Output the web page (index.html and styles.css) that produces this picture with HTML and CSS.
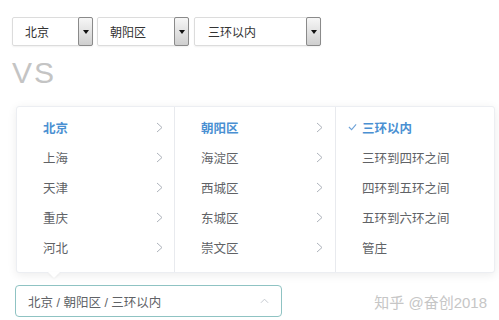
FILE: index.html
```html
<!DOCTYPE html>
<html>
<head>
    <title>Cascader</title>
<link rel="stylesheet" href="styles.css">
</head>
<body>
  <div class="selects">
    <div class="select w1"><span>北京</span><div class="btn"><i></i></div></div>
    <div class="select w2"><span>朝阳区</span><div class="btn"><i></i></div></div>
    <div class="select w3"><span>三环以内</span><div class="btn"><i></i></div></div>
  </div>
  <div class="vs">VS</div>

  <div class="panel">
    <div class="menu m1">
      <div class="item active"><span>北京</span><svg class="chev" viewBox="0 0 7 11"><polyline points="1,1 6,5.5 1,10"/></svg></div>
      <div class="item"><span>上海</span><svg class="chev" viewBox="0 0 7 11"><polyline points="1,1 6,5.5 1,10"/></svg></div>
      <div class="item"><span>天津</span><svg class="chev" viewBox="0 0 7 11"><polyline points="1,1 6,5.5 1,10"/></svg></div>
      <div class="item"><span>重庆</span><svg class="chev" viewBox="0 0 7 11"><polyline points="1,1 6,5.5 1,10"/></svg></div>
      <div class="item"><span>河北</span><svg class="chev" viewBox="0 0 7 11"><polyline points="1,1 6,5.5 1,10"/></svg></div>
    </div>
    <div class="menu m2">
      <div class="item active"><span>朝阳区</span><svg class="chev" viewBox="0 0 7 11"><polyline points="1,1 6,5.5 1,10"/></svg></div>
      <div class="item"><span>海淀区</span><svg class="chev" viewBox="0 0 7 11"><polyline points="1,1 6,5.5 1,10"/></svg></div>
      <div class="item"><span>西城区</span><svg class="chev" viewBox="0 0 7 11"><polyline points="1,1 6,5.5 1,10"/></svg></div>
      <div class="item"><span>东城区</span><svg class="chev" viewBox="0 0 7 11"><polyline points="1,1 6,5.5 1,10"/></svg></div>
      <div class="item"><span>崇文区</span><svg class="chev" viewBox="0 0 7 11"><polyline points="1,1 6,5.5 1,10"/></svg></div>
    </div>
    <div class="menu m3">
      <div class="item active"><svg class="check" viewBox="0 0 10 8"><polyline points="1,4 4,7 9,1"/></svg><span>三环以内</span></div>
      <div class="item"><span>三环到四环之间</span></div>
      <div class="item"><span>四环到五环之间</span></div>
      <div class="item"><span>五环到六环之间</span></div>
      <div class="item"><span>管庄</span></div>
    </div>
    <div class="arrow"></div>
  </div>

  <div class="bottom">
    <div class="input">
      <span>北京 / 朝阳区 / 三环以内</span>
      <svg class="up" viewBox="0 0 10 6"><polyline points="1,5 5,1 9,5"/></svg>
    </div>
    <div class="mark">知乎 @奋创2018</div>
  </div>
</body>
</html>
```

FILE: styles.css
```css
body {
  margin: 0;
  padding-top: 17px;
  background-color: white;
  font-family: "Liberation Sans", "Noto Sans CJK SC", sans-serif;
  color: #606266;
}
.selects {
  display: flex;
  margin-left: 12px;
  gap: 4px;
}
.select {
  display: flex;
  align-items: center;
  justify-content: space-between;
  height: 27px;
  border: 1px solid #dcdcdc;
  border-radius: 2px;
  box-shadow: 0 1px 2px rgba(0, 0, 0, 0.06);
  font-size: 12px;
  color: #333;
}
.select span {
  padding-left: 12px;
}
.w1 { width: 79px; }
.w2 { width: 90px; }
.w3 { width: 125px; margin-left: 1px; }
.w3 span { padding-left: 13px; }
.btn {
  width: 13px;
  height: 27px;
  margin-right: -1px;
  border: 1px solid #8a8a8a;
  border-radius: 2px;
  background: linear-gradient(#f6f6f6, #cfcfcf);
  display: flex;
  justify-content: center;
  align-items: center;
}
.btn i {
  width: 0;
  height: 0;
  border-left: 3px solid transparent;
  border-right: 3px solid transparent;
  border-top: 4px solid #111;
}
.vs {
  margin: 12px 0 0 12px;
  font-size: 30px;
  line-height: 30px;
  height: 30px;
  letter-spacing: 2px;
  color: #c4c4c4;
}
.panel {
  position: relative;
  display: flex;
  margin: 18px 0 0 16px;
  width: 477px;
  height: 165px;
  border: 1px solid #eceef2;
  border-radius: 3px;
  box-shadow: 0 2px 10px rgba(0, 0, 0, 0.08);
  background: white;
}
.menu {
  padding-top: 5px;
  box-sizing: border-box;
}
.m1, .m2 {
  border-right: 1px solid #e8eaee;
}
.m1 { width: 158px; }
.m2 { width: 161px; }
.m3 { flex: 1; }
.item {
  display: flex;
  align-items: center;
  height: 30px;
  font-size: 12.5px;
  padding: 0 11px 0 26px;
}
.m2 .item { padding-right: 12px; }
.item span {
  flex: 1;
}
.item.active {
  color: #4a90d2;
  font-weight: bold;
}
.chev {
  width: 7px;
  height: 11px;
  fill: none;
  stroke: #aeb3bb;
  stroke-width: 1;
}
.check {
  width: 9px;
  height: 8px;
  margin-left: -14px;
  margin-right: 5px;
  fill: none;
  stroke: #6fa3d8;
  stroke-width: 1.2;
}
.arrow {
  position: absolute;
  left: 31px;
  bottom: -6px;
  width: 0;
  height: 0;
  border-left: 6px solid transparent;
  border-right: 6px solid transparent;
  border-top: 6px solid white;
  filter: drop-shadow(0 1px 1px rgba(0, 0, 0, 0.05));
}
.bottom {
  display: flex;
  align-items: center;
  margin: 12px 0 0 15px;
}
.input {
  display: flex;
  align-items: center;
  justify-content: space-between;
  width: 265px;
  height: 30px;
  border: 1px solid #8fc3c3;
  border-radius: 4px;
  font-size: 12.5px;
}
.input span {
  padding-left: 12px;
}
.up {
  width: 9px;
  height: 6px;
  margin-right: 12px;
  fill: none;
  stroke: #c0c4cc;
  stroke-width: 1;
}
.mark {
  margin-left: auto;
  margin-right: 12px;
  font-size: 15px;
  color: #c6c6c6;
}
```
